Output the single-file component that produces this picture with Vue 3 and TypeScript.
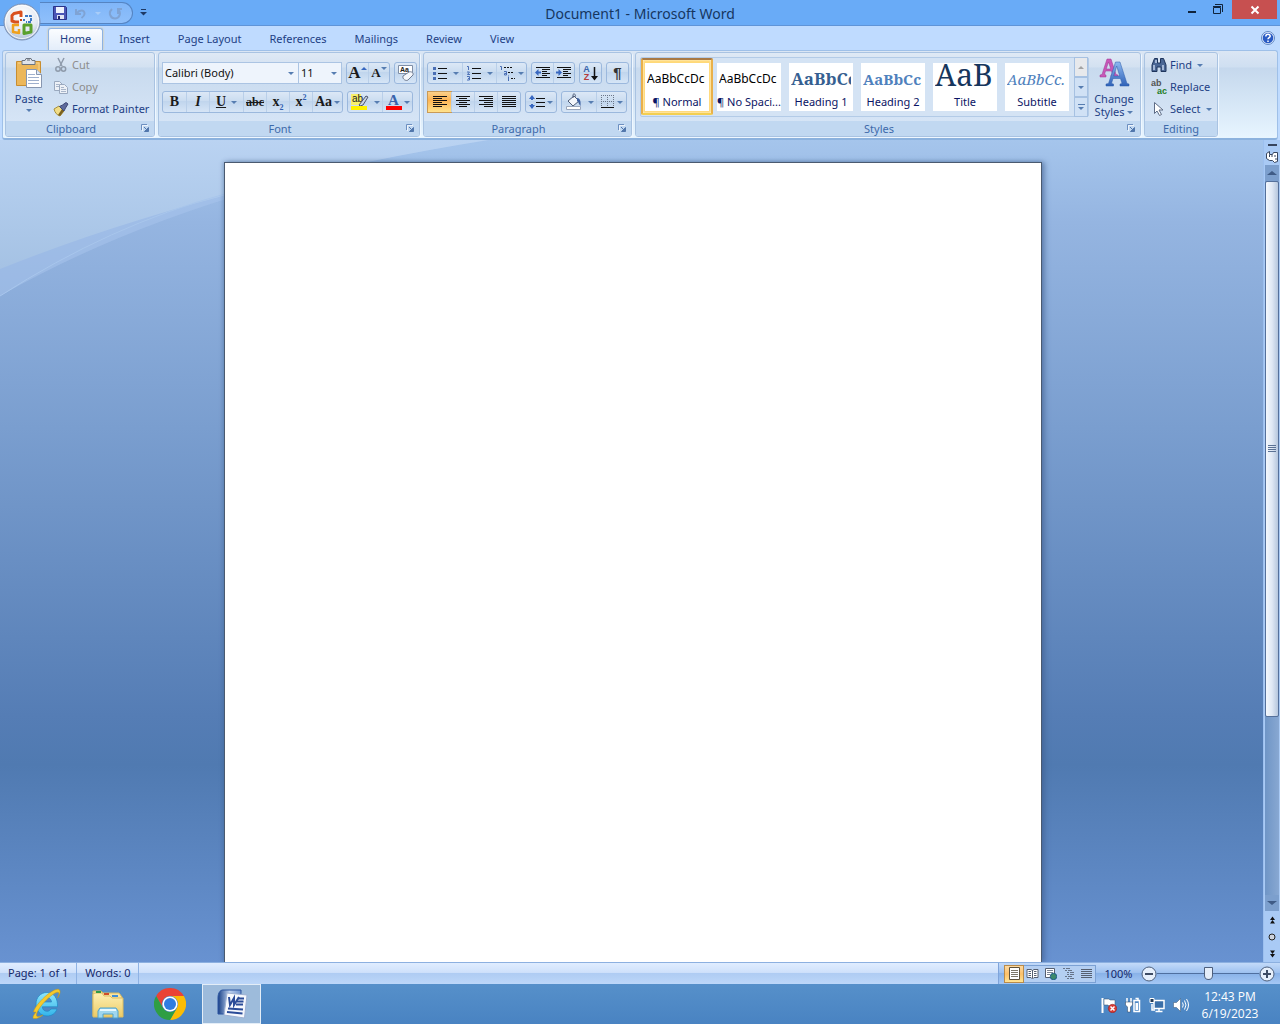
<script setup lang="ts">
import { ref } from 'vue'

interface StyleItem {
  name: string
  sample: string
  kind: string
}

const tabs: string[] = ['Home', 'Insert', 'Page Layout', 'References', 'Mailings', 'Review', 'View']
const activeTab = ref('Home')

const styles: StyleItem[] = [
  { name: '¶ Normal', sample: 'AaBbCcDc', kind: 'normal' },
  { name: '¶ No Spaci...', sample: 'AaBbCcDc', kind: 'normal' },
  { name: 'Heading 1', sample: 'AaBbCc', kind: 'h1' },
  { name: 'Heading 2', sample: 'AaBbCc', kind: 'h2' },
  { name: 'Title', sample: 'AaB', kind: 'title' },
  { name: 'Subtitle', sample: 'AaBbCc.', kind: 'subtitle' },
]
const activeStyle = ref('¶ Normal')

const fontName = ref('Calibri (Body)')
const fontSize = ref('11')
const align = ref('left')
const aligns: string[] = ['left', 'center', 'right', 'justify']
const view = ref('print')
const views: string[] = ['print', 'reading', 'web', 'outline', 'draft']
const zoom = ref(100)
const body = ref('')
</script>

<template>
  <div class="app">
    <svg class="defs" aria-hidden="true">
      <defs>
        <linearGradient id="gBlueA" x1="0" y1="0" x2="0" y2="1">
          <stop offset="0" stop-color="#8db8f0" /><stop offset="1" stop-color="#2f62b8" />
        </linearGradient>
        <linearGradient id="gFolder" x1="0" y1="0" x2="0" y2="1">
          <stop offset="0" stop-color="#fdf0b4" /><stop offset="1" stop-color="#eccb66" />
        </linearGradient>
        <linearGradient id="gIe" x1="0" y1="0" x2="0" y2="1">
          <stop offset="0" stop-color="#8fe6fb" /><stop offset="1" stop-color="#33b4ea" />
        </linearGradient>
        <linearGradient id="gWord" x1="0" y1="0" x2="1" y2="0">
          <stop offset="0" stop-color="#173f87" /><stop offset="0.5" stop-color="#bcd0ee" /><stop offset="1" stop-color="#6f93cf" />
        </linearGradient>
        <radialGradient id="gOrb" cx="0.5" cy="0.3" r="0.75">
          <stop offset="0" stop-color="#ffffff" /><stop offset="0.6" stop-color="#e3e9f2" /><stop offset="1" stop-color="#9fb2cd" />
        </radialGradient>
        <linearGradient id="gSwoosh" x1="0" y1="0" x2="0" y2="1">
          <stop offset="0" stop-color="#bad3f2" /><stop offset="1" stop-color="#a5c2e4" />
        </linearGradient>
      </defs>
      <symbol id="launcher" viewBox="0 0 9 9">
        <path d="M0.5 6V0.5H6" fill="none" stroke="#6c8fc0" />
        <path d="M3 3l3 3" stroke="#5277ac" />
        <path d="M7.5 3.5v4h-4z" fill="#5277ac" stroke="#5277ac" />
        <path d="M1.500 7V1.500H7" fill="none" stroke="#fff" opacity=".7" />
      </symbol>
      <symbol id="lines-left" viewBox="0 0 16 14"><path d="M1 1.500h14M1 3.500h9M1 5.500h14M1 7.500h9M1 9.500h14M1 11.500h9" stroke="#111" /></symbol>
      <symbol id="lines-center" viewBox="0 0 16 14"><path d="M1 1.500h14M4 3.500h8M1 5.500h14M4 7.500h8M1 9.500h14M4 11.500h8" stroke="#111" /></symbol>
      <symbol id="lines-right" viewBox="0 0 16 14"><path d="M1 1.500h14M6 3.500h9M1 5.500h14M6 7.500h9M1 9.500h14M6 11.500h9" stroke="#111" /></symbol>
      <symbol id="lines-justify" viewBox="0 0 16 14"><path d="M1 1.500h14M1 3.500h14M1 5.500h14M1 7.500h14M1 9.500h14M1 11.500h14" stroke="#111" /></symbol>
      <symbol id="view-print" viewBox="0 0 13 13">
        <path d="M1.500.5h10v12h-10z" fill="#fff" stroke="#5d513c" /><path d="M3 3.500h7M3 5.500h7M3 7.500h7M3 9.500h7" stroke="#7c7668" />
      </symbol>
      <symbol id="view-reading" viewBox="0 0 13 13">
        <path d="M1 2.500h4l1.500 1 1.500-1h4v8H8l-1.500 1.500L5 10.500H1z" fill="#fff" stroke="#555f70" /><path d="M6.500 3v8M2.500 4.500H5M2.500 6.500H5M2.500 8.500H5M8 4.500h2.500M8 6.500h2.500M8 8.500h2.500" stroke="#555f70" />
      </symbol>
      <symbol id="view-web" viewBox="0 0 13 13">
        <path d="M1.500 1.500h9v9h-9z" fill="#fff" stroke="#555f70" /><path d="M3 3.500h6M3 5.500h6M3 7.500h3" stroke="#7a8494" /><circle cx="9.500" cy="9.500" r="3.200" fill="#3c8a6b" stroke="#1f5c8b" />
      </symbol>
      <symbol id="view-outline" viewBox="0 0 13 13">
        <path d="M1 1.500h7M3 3.500h7M5 5.500h7M5 7.500h7M3 9.500h7M5 11.500h7" stroke="#667388" stroke-dasharray="2 1 8 0" />
      </symbol>
      <symbol id="view-draft" viewBox="0 0 13 13">
        <path d="M1 2.500h11M1 4.500h11M1 6.500h11M1 8.500h11M1 10.500h11" stroke="#555f70" />
      </symbol>
    </svg>

    <header class="titlebar">
      <button class="orb" aria-label="Office Button">
        <svg viewBox="0 0 38 38" width="38" height="38">
          <circle cx="19" cy="19" r="18" fill="url(#gOrb)" stroke="#7a90b4" />
          <circle cx="19" cy="19" r="16.500" fill="none" stroke="#fff" opacity=".8" />
          <g fill="none" stroke-linejoin="round">
            <path d="M18 14V9l-7 1.500-2 2V18l3 1h4" stroke="#d9501e" stroke-width="3" />
            <path d="M22 13h6v6h-5" stroke="#3c78c4" stroke-width="2" stroke-dasharray="3 1" />
            <path d="M16 22h-6v7l6 1v-4" stroke="#f0a11c" stroke-width="2.500" />
            <path d="M21 22h7v7l-7 1.500z" stroke="#5aa02c" stroke-width="3" />
          </g>
          <path d="M17 16h2v2h-2z" fill="#c0461c" /><path d="M20 16h2v2h-2z" fill="#3c78c4" />
        </svg>
      </button>
      <div class="qat">
        <button class="qbtn" aria-label="Save">
          <svg viewBox="0 0 14 14" width="14" height="14"><path d="M.5.500h12l1 1v12H.5z" fill="#4a55b5" stroke="#2b3388" /><path d="M3 1h8v6H3z" fill="#eef2fc" /><path d="M4 9h7v4H4z" fill="#dfe3f3" /><path d="M5 10h2v3H5z" fill="#20276e" /></svg>
        </button>
        <button class="qbtn" aria-label="Undo" disabled>
          <svg viewBox="0 0 14 14" width="14" height="14"><path d="M2 3v5h5M2.500 7.500C6 3 11 4 10.500 8c-.2 2-1.500 3-3 4" fill="none" stroke="#7fa3d4" stroke-width="2" /></svg>
        </button>
        <i class="arrow pale"></i>
        <button class="qbtn" aria-label="Repeat" disabled>
          <svg viewBox="0 0 14 14" width="14" height="14"><path d="M4 3C-.5 7 3 12.500 7 12.500S14 7 10 3.500M10 8V3h4" fill="none" stroke="#7fa3d4" stroke-width="2" /></svg>
        </button>
      </div>
      <button class="qmore" aria-label="Customize Quick Access Toolbar">
        <svg viewBox="0 0 7 7" width="7" height="7"><path d="M1 .5h5" stroke="#1e3a66" /><path d="M0 3h7L3.500 6.500z" fill="#1e3a66" /></svg>
      </button>
      <h1>Document1 - Microsoft Word</h1>
      <div class="winbtns">
        <button aria-label="Minimize"><svg viewBox="0 0 12 12" width="12" height="12"><path d="M2 9h8" stroke="#10243c" stroke-width="2" /></svg></button>
        <button aria-label="Restore"><svg viewBox="0 0 12 12" width="12" height="12"><path d="M1.500 4.500h7v6h-7zM1 3.500h8M3 1.500h7.500V9" fill="none" stroke="#10243c" /></svg></button>
        <button class="close" aria-label="Close"><svg viewBox="0 0 12 12" width="12" height="12"><path d="M2.500 2.500l7 7M9.500 2.500l-7 7" stroke="#fff" stroke-width="2" /></svg></button>
      </div>
    </header>

    <nav class="tabs" role="tablist">
      <button v-for="t in tabs" :key="t" role="tab" class="tab" :class="{ active: t === activeTab }" :aria-selected="t === activeTab" @click="activeTab = t">{{ t }}</button>
      <button class="help" aria-label="Help">
        <svg viewBox="0 0 14 14" width="14" height="14"><circle cx="7" cy="7" r="6.500" fill="#e8f1fd" stroke="#5f87c4" /><circle cx="7" cy="7" r="5.300" fill="#2a5bc4" /><path d="M4.800 5.500c0-3 4.600-2.800 4.400-.2C9.100 6.600 7 6.600 7 8.300M7 9.500v1.500" fill="none" stroke="#fff" stroke-width="1.500" /></svg>
      </button>
    </nav>

    <section class="ribbon">
      <div class="group clipboard">
        <div class="content">
          <button class="big paste">
            <svg viewBox="0 0 28 32" width="28" height="32">
              <path d="M1.500 4.500h24v24h-24z" fill="#ecb75a" stroke="#c88d30" />
              <path d="M3 6h21v21" fill="none" stroke="#f7d48c" />
              <path d="M7 3.500h3l1-2h5l1 2h3v4H7z" fill="#dfe3ea" stroke="#6c7480" />
              <path d="M12 3h3" stroke="#5e6672" />
              <path d="M11.500 12.500h10l5 5v13h-15z" fill="#fff" stroke="#8796b0" />
              <path d="M21.500 12.500v5h5" fill="#dfe8f5" stroke="#8796b0" />
              <path d="M13 17.500h7M13 20.500h11M13 23.500h11M13 26.500h11" stroke="#9fb0cd" />
            </svg>
            <span>Paste</span>
            <i class="arrow"></i>
          </button>
          <div class="stack">
            <button class="small" disabled>
              <svg viewBox="0 0 16 16" width="16" height="16"><path d="M5 1l4 8M11 1L7 9" stroke="#8f9bab" stroke-width="1.500" /><circle cx="5" cy="12" r="2.200" fill="none" stroke="#8f9bab" stroke-width="1.500" /><circle cx="10.500" cy="12" r="2.200" fill="none" stroke="#8f9bab" stroke-width="1.500" /></svg>
              Cut
            </button>
            <button class="small" disabled>
              <svg viewBox="0 0 16 16" width="16" height="16"><path d="M1.500 2.500h5l3 3v6h-8z" fill="#edf1f7" stroke="#9aa9bf" /><path d="M6.500 5.500h5l3 3v6h-8z" fill="#edf1f7" stroke="#9aa9bf" /><path d="M3 5.500h3M3 7.500h3M8 8.500h3M8 10.500h5M8 12.500h5" stroke="#a9b6ca" /></svg>
              Copy
            </button>
            <button class="small">
              <svg viewBox="0 0 16 16" width="16" height="16"><path d="M1 8l5-3 5 5-4 5c-3-1-5-3-6-7z" fill="#f1dc86" stroke="#a8913b" /><path d="M7 15l4-5-2-2-4 6z" fill="#7b6120" /><path d="M6.500 5.500l3-1.500L13 1.500l2 1.500-2.500 4-1.500 3z" fill="#5d6a9c" stroke="#3e4874" /></svg>
              Format Painter
            </button>
          </div>
        </div>
        <footer><span>Clipboard</span><button aria-label="Clipboard options"><svg width="9" height="9"><use href="#launcher" /></svg></button></footer>
      </div>

      <div class="group font">
        <div class="content rows">
          <div class="row">
            <div class="combos">
              <label class="combo name"><select v-model="fontName" aria-label="Font"><option>Calibri (Body)</option><option>Cambria</option></select><i class="arrow"></i></label>
              <label class="combo size"><select v-model="fontSize" aria-label="Font size"><option>11</option><option>12</option></select><i class="arrow"></i></label>
            </div>
            <div class="bg">
              <button class="b serif grow" aria-label="Grow Font">A<i class="tri up"></i></button>
              <button class="b serif shrink" aria-label="Shrink Font">A<i class="tri"></i></button>
            </div>
            <div class="bg">
              <button class="b" aria-label="Clear Formatting">
                <svg viewBox="0 0 18 18" width="18" height="18"><path d="M1.500 1.500h14v8h-14z" fill="#fff" stroke="#7f8ea6" /><text x="3" y="8" font-size="7" font-weight="700" font-family="Liberation Sans" fill="#222">Aa</text><path d="M6 12l6-4c2-1 5 1 4 3l-5 5c-2 1.500-6-1-5-4z" fill="#f5f7fb" stroke="#6f7b90" /></svg>
              </button>
            </div>
          </div>
          <div class="row">
            <div class="bg">
              <button class="b serif"><b>B</b></button>
              <button class="b serif"><b><em>I</em></b></button>
              <button class="b wide serif"><b class="u">U</b><i class="arrow"></i></button>
              <button class="b serif strike">abc</button>
              <button class="b serif"><b>x<sub>2</sub></b></button>
              <button class="b serif"><b>x<sup>2</sup></b></button>
              <button class="b mid serif case">Aa<i class="arrow"></i></button>
            </div>
            <div class="bg">
              <button class="b wide" aria-label="Text Highlight Color">
                <svg viewBox="0 0 18 18" width="18" height="18"><path d="M0 1h10v11H0z" fill="#f7f06a" /><text x="1" y="9" font-size="10" font-family="Liberation Sans" fill="#222">ab</text><path d="M8 12l7-9 2 1-5 8-3 1z" fill="#c9d3e4" stroke="#4c566c" /><path d="M0 13h16v4H0z" fill="#fff200" /></svg>
                <i class="arrow"></i>
              </button>
              <button class="b mid" aria-label="Font Color">
                <span class="fc">A</span><i class="arrow"></i>
              </button>
            </div>
          </div>
        </div>
        <footer><span>Font</span><button aria-label="Font options"><svg width="9" height="9"><use href="#launcher" /></svg></button></footer>
      </div>

      <div class="group paragraph">
        <div class="content rows">
          <div class="row">
            <div class="bg">
              <button class="b wide" aria-label="Bullets"><svg viewBox="0 0 16 16" width="16" height="16"><path d="M6 3.500h9M6 8.500h9M6 13.500h9" stroke="#111" /><path d="M1 2h3v3H1zM1 7h3v3H1zM1 12h3v3H1z" fill="#4a6fb5" /></svg><i class="arrow"></i></button>
              <button class="b wide" aria-label="Numbering"><svg viewBox="0 0 16 16" width="16" height="16"><path d="M6 3.500h9M6 8.500h9M6 13.500h9" stroke="#111" /><path d="M1 1.500h1.500V5M1 7h2.500L1.500 9.500H4M1 11.500h2.500v3.500H1M2 13.500h1.500" fill="none" stroke="#4a6fb5" /></svg><i class="arrow"></i></button>
              <button class="b mid" aria-label="Multilevel List"><svg viewBox="0 0 17 16" width="17" height="16"><path d="M5 2.500h8M9 7.500h6M12 13.500h4" stroke="#111" stroke-dasharray="2 1" /><path d="M1 1.500h1.500V5M5 6.500h2.500V10H5.500V8.500h2M9.500 10.500v1M9.500 12v4" fill="none" stroke="#4a6fb5" /></svg><i class="arrow"></i></button>
            </div>
            <div class="bg">
              <button class="b" aria-label="Decrease Indent"><svg viewBox="0 0 16 14" width="16" height="14"><path d="M1 1.500h14M7 3.500h8M7 5.500h5M7 7.500h8M7 9.500h5M1 11.500h14" stroke="#111" /><path d="M0 6.500L3.500 3v7z" fill="#3767c0" /><path d="M3 6.500h3" stroke="#3767c0" stroke-width="2" /></svg></button>
              <button class="b" aria-label="Increase Indent"><svg viewBox="0 0 16 14" width="16" height="14"><path d="M1 1.500h14M7 3.500h8M7 5.500h5M7 7.500h8M7 9.500h5M1 11.500h14" stroke="#111" /><path d="M6 6.500L2.500 3v7z" fill="#3767c0" /><path d="M0 6.500h3" stroke="#3767c0" stroke-width="2" /></svg></button>
            </div>
            <div class="bg">
              <button class="b sort" aria-label="Sort"><span><span>A</span><span class="z">Z</span></span><svg viewBox="0 0 7 15" width="7" height="15"><path d="M3.500 1v12" stroke="#111" stroke-width="1.500" /><path d="M0 10h7l-3.500 4.500z" fill="#111" /></svg></button>
            </div>
            <div class="bg"><button class="b pil">¶</button></div>
          </div>
          <div class="row">
            <div class="bg">
              <button v-for="a in aligns" :key="a" class="b al" :class="{ on: align === a }" :aria-label="'Align ' + a" @click="align = a"><svg width="16" height="14"><use :href="'#lines-' + a" /></svg></button>
            </div>
            <div class="bg">
              <button class="b mid" aria-label="Line Spacing"><svg viewBox="0 0 16 16" width="16" height="16"><path d="M7 4.500h9M7 8.500h9M7 12.500h9" stroke="#111" /><path d="M0 5l3-4 3 4zM0 11l3 4 3-4z" fill="#3767c0" /><path d="M3 4v2M3 10v2" stroke="#3767c0" stroke-width="2" /></svg><i class="arrow"></i></button>
            </div>
            <div class="bg">
              <button class="b wide" aria-label="Shading"><svg viewBox="0 0 18 18" width="18" height="18"><path d="M3 8l6-5 5 5-6 5z" fill="#f3f6fb" stroke="#4d5b76" /><path d="M8 5V1.500c1.500-1.500 2.500 0 2.500 2" fill="none" stroke="#4d5b76" /><path d="M12 5c3 0 4 3 3.500 8-2-2-1.500-4-3.500-5z" fill="#3c5f9f" /><path d="M1.500 13.500h14v3h-14z" fill="#fff" stroke="#9aa7bd" /></svg><i class="arrow"></i></button>
              <button class="b mid" aria-label="Borders"><svg viewBox="0 0 14 14" width="14" height="14"><path d="M.5 0v13M6.500 0v13M12.500 0v13M0 .5h13M0 6.500h13" fill="none" stroke="#6b7688" stroke-dasharray="1 1" /><path d="M0 12.500h13" stroke="#111" /></svg><i class="arrow"></i></button>
            </div>
          </div>
        </div>
        <footer><span>Paragraph</span><button aria-label="Paragraph options"><svg width="9" height="9"><use href="#launcher" /></svg></button></footer>
      </div>

      <div class="group styles">
        <div class="content">
          <div class="gallery">
            <button v-for="s in styles" :key="s.name" class="card" :class="{ sel: activeStyle === s.name }" @click="activeStyle = s.name">
              <span class="sheet"><span class="sample" :class="s.kind">{{ s.sample }}</span><span class="nm">{{ s.name }}</span></span>
            </button>
            <div class="spin">
              <button disabled aria-label="Scroll up"><i class="tri up"></i></button>
              <button aria-label="Scroll down"><i class="arrow"></i></button>
              <button aria-label="More styles"><i class="bar"></i><i class="arrow"></i></button>
            </div>
          </div>
          <button class="big change">
            <svg viewBox="0 0 32 32" width="32" height="32">
              <path fill-rule="evenodd" d="M2 20v-2l2-.5L9 2h4l5 15.500 2 .5v2h-7v-2l1.500-.5-1-3.500h-6L6.500 17.500 8 18v2zM8.200 12h4.600L10.500 5z" fill="#c858b8" stroke="#9c3592" stroke-width=".5" />
              <path fill-rule="evenodd" d="M8 29v-2l2.500-.5L17.500 5H22l7 21.500 2 .5v2h-9v-2l2-.5-1.500-5H15l-1.500 5 2 .5v2zM15.700 19h6L18.700 9z" fill="url(#gBlueA)" stroke="#2b5aa8" stroke-width=".5" />
            </svg>
            <span>Change<br />Styles <i class="arrow"></i></span>
          </button>
        </div>
        <footer><span>Styles</span><button aria-label="Styles options"><svg width="9" height="9"><use href="#launcher" /></svg></button></footer>
      </div>

      <div class="group editing">
        <div class="content">
          <div class="stack">
            <button class="small">
              <svg viewBox="0 0 16 16" width="16" height="16"><path d="M3.500 1.500h3V6h3V1.500h3L15 8v6.500h-5V10H6v4.500H1V8z" fill="#4a6694" stroke="#1f355c" /><path d="M3 8v5M12 8v5M5 3v3" stroke="#c4d4ee" stroke-width="1.500" /></svg>
              Find <i class="arrow"></i>
            </button>
            <button class="small">
              <span class="rep"><span>ab</span><b>ac</b></span>
              Replace
            </button>
            <button class="small">
              <svg viewBox="0 0 16 16" width="16" height="16"><path d="M3.500 1.500v11l2.500-2.500 2.500 4.500 2-1-2.500-4.500h4z" fill="#fff" stroke="#5e6c86" /></svg>
              Select <i class="arrow"></i>
            </button>
          </div>
        </div>
        <footer><span>Editing</span></footer>
      </div>
    </section>

    <main class="work">
      <div class="canvas">
        <svg class="swoosh" viewBox="0 0 520 160" width="520" height="160" aria-hidden="true">
          <path d="M0 0H492Q200 42 0 156z" fill="#a9c6ee" opacity=".5" />
          <path d="M0 0H488Q210 45 0 129z" fill="url(#gSwoosh)" />
          <path d="M0 156Q110 85 225 54" fill="none" stroke="#a8c6ec" />
        </svg>
        <textarea v-model="body" class="page" aria-label="Document text"></textarea>
      </div>
      <aside class="scroll">
        <button class="split" aria-label="Split window"></button>
        <button class="ruler" aria-label="View Ruler"><svg viewBox="0 0 12 12" width="12" height="12"><path d="M.5 2.500L3.500.5v3h3l1-2h4v9l-3 1-2-2h-3l-3-2z" fill="#fff" stroke="#37455e" /><path d="M3.500 4v2M6 4v2M9 4v2M9 8h2" stroke="#37455e" /></svg></button>
        <button class="sb" aria-label="Scroll up"><i class="tri up"></i></button>
        <div class="track"><div class="thumb"><i></i><i></i><i></i><i></i></div></div>
        <button class="sb" aria-label="Scroll down"><i class="tri"></i></button>
        <button class="nav" aria-label="Previous page"><svg viewBox="0 0 7 8" width="7" height="8"><path d="M1 4l2.500-3.500L6 4zM1 7.500L3.500 4 6 7.500z" fill="#111" /></svg></button>
        <button class="nav" aria-label="Select browse object"><svg viewBox="0 0 8 8" width="8" height="8"><circle cx="4" cy="4" r="3" fill="#cdd3dd" stroke="#222" /></svg></button>
        <button class="nav" aria-label="Next page"><svg viewBox="0 0 7 8" width="7" height="8"><path d="M1 .5L3.500 4 6 .5zM1 4l2.500 3.500L6 4z" fill="#111" /></svg></button>
      </aside>
    </main>

    <div class="status">
      <button class="st">Page: 1 of 1</button>
      <button class="st">Words: 0</button>
      <div class="right">
        <div class="views">
          <button v-for="v in views" :key="v" :class="{ on: view === v }" :aria-label="v + ' view'" @click="view = v"><svg width="13" height="13"><use :href="'#view-' + v" /></svg></button>
        </div>
        <button class="pct">{{ zoom }}%</button>
        <div class="zoom">
          <button aria-label="Zoom out"><svg viewBox="0 0 16 16" width="16" height="16"><circle cx="8" cy="8" r="7" fill="#e6effb" stroke="#4d5f7c" /><path d="M4 8h8" stroke="#3e4c64" stroke-width="2" /></svg></button>
          <input v-model="zoom" type="range" min="0" max="200" aria-label="Zoom" />
          <button aria-label="Zoom in"><svg viewBox="0 0 16 16" width="16" height="16"><circle cx="8" cy="8" r="7" fill="#e6effb" stroke="#4d5f7c" /><path d="M4 8h8M8 4v8" stroke="#3e4c64" stroke-width="2" /></svg></button>
        </div>
      </div>
    </div>

    <footer class="taskbar">
      <div class="apps">
        <button aria-label="Internet Explorer">
          <svg viewBox="0 0 32 32" width="32" height="32">
            <path fill-rule="evenodd" d="M17 4.500c-6.500 0-11 5-11 11.500s4.500 12 11 12c4.700 0 8.500-2.500 10-7h-6c-1 1.500-2.300 2.300-4 2.300-2.700 0-4.500-1.700-4.700-4.500h15.200C28 10.500 24 4.500 17 4.500zM12.300 14c.5-2.700 2.200-4.300 4.700-4.300s4.300 1.600 4.500 4.300z" fill="url(#gIe)" stroke="#1f86c4" stroke-width=".7" />
            <path d="M6 24c-3 4-4 6-2 6.500 2.500.6 6-1.200 9-3.500-2 .9-5 2.200-6.200 1.200C5.500 26.800 8 21 14 14.500S26.500 3 28.500 4.500c1 .9.3 3-1 5.500 2.500-4 3.500-7.200 1.500-8.500C26 0 18.500 5 12.500 11 8 15.500 4 21 3.500 24z" fill="#f6c92c" stroke="#c79612" stroke-width=".5" />
          </svg>
        </button>
        <button aria-label="File Explorer">
          <svg viewBox="0 0 32 32" width="32" height="32">
            <path d="M1 5V3h8l2 2h8V5h8l3 4v19H1z" fill="#f7e3a0" stroke="#d8b85c" />
            <path d="M3 5h7l2 3h6l2 2h11v19H1V6z" fill="url(#gFolder)" stroke="#dcbc62" />
            <path d="M4 3h5v2H4z" fill="#2e9a48" /><path d="M12 5h5v2h-5z" fill="#d04c2a" /><path d="M20 7h6v2h-6z" fill="#3f8fd8" />
            <path d="M6 30v-7l2-3h16l2 3v7h-5v-4H11v4z" fill="#9fd6ee" stroke="#4fa2cc" /><path d="M8 22h16" stroke="#e6f8ff" stroke-width="2" />
          </svg>
        </button>
        <button aria-label="Google Chrome">
          <svg viewBox="0 0 32 32" width="32" height="32">
            <path d="M2.140 8A16 16 0 0 1 29.860 8H16a8 8 0 0 0-6.930 12z" fill="#ea4335" />
            <path d="M29.860 8A16 16 0 0 1 16 32l6.930-12A8 8 0 0 0 16 8z" fill="#fbbc05" />
            <path d="M16 32A16 16 0 0 1 2.140 8l6.930 12a8 8 0 0 0 13.860 0z" fill="#2f9e44" />
            <circle cx="16" cy="16" r="7.600" fill="#fff" /><circle cx="16" cy="16" r="6" fill="#2f7de1" />
          </svg>
        </button>
        <button class="run" aria-label="Microsoft Word">
          <svg viewBox="0 0 32 32" width="32" height="32">
            <path d="M7 2h18v3l-3 21H2V10c0-5 2-8 5-8z" fill="url(#gWord)" stroke="#2c55a0" />
            <path d="M11 5l20 2-2.500 23L8 27z" fill="#f6f8fd" stroke="#9db0d2" />
            <path d="M13 9l1 8 4-7v7l5-8" fill="none" stroke="#2a4b98" stroke-width="2" />
            <path d="M22 10.500h6M21 13.500h6.500M20 16.500h7M12 20.500l15 1M11 24l15.500 1.500" stroke="#2a4b98" stroke-width="2" />
          </svg>
        </button>
      </div>
      <div class="tray">
        <button aria-label="Action Center"><svg viewBox="0 0 16 16" width="16" height="16"><path d="M1.500 1v15" stroke="#fff" stroke-width="2" /><path d="M3 2h5l1 1h5v6H8L7 8H3z" fill="#fff" stroke="#35516f" stroke-width=".5" /><circle cx="11.500" cy="11.500" r="4.200" fill="#d93a34" stroke="#8e1c1c" stroke-width=".5" /><path d="M9.500 9.500l4 4M13.500 9.500l-4 4" stroke="#fff" stroke-width="1.500" /></svg></button>
        <button aria-label="Power"><svg viewBox="0 0 16 16" width="16" height="16"><path d="M2 1v4M6 1v4" stroke="#fff" stroke-width="1.500" /><path d="M.5 5h7v3L5.500 10v5h-3v-5l-2-2z" fill="#fff" stroke="#243b56" stroke-width=".5" /><path d="M9 3.500h5.500v11H9zM10.500 1.500h2.500v2" fill="none" stroke="#fff" stroke-width="1.500" /><path d="M10.500 6h2.500v7h-2.500z" fill="#fff" /></svg></button>
        <button aria-label="Network"><svg viewBox="0 0 16 16" width="16" height="16"><path d="M5 3.500h10v8H5z" fill="#3a6fa8" stroke="#fff" stroke-width="1.500" /><path d="M10 12v2M6.500 14.500h7M3 7v6h3" fill="none" stroke="#fff" stroke-width="1.500" /><path d="M1 1.500h4v4H1z" fill="#243b56" stroke="#fff" /></svg></button>
        <button aria-label="Volume"><svg viewBox="0 0 16 16" width="16" height="16"><path d="M.5 5.500h3l4-4v13l-4-4h-3z" fill="#fff" stroke="#35516f" stroke-width=".5" /><path d="M9.500 5.500q1.500 2.500 0 5M11.500 3.500q3 4.500 0 9M13.500 2q4 6 0 12" fill="none" stroke="#fff" /></svg></button>
        <time class="clock"><span>12:43 PM</span><span>6/19/2023</span></time>
      </div>
    </footer>
  </div>
</template>

<style>
body { margin: 0; }
</style>

<style scoped>
.app {
  display: flex; flex-direction: column; height: 100vh; overflow: hidden;
  font: 11px/14px "Noto Sans", "Open Sans", sans-serif; color: #1e3f85; background: #bfdbff;
}
.app *, .app *::before, .app *::after { box-sizing: border-box; }
.defs { position: absolute; width: 0; height: 0; }
button { font: inherit; color: inherit; background: none; border: 0; padding: 0; margin: 0; }
svg { display: block; flex: none; }
.arrow, .tri { display: inline-block; flex: none; width: 0; height: 0; border: 3px solid transparent; border-top-color: #567db1; border-bottom-width: 0; }
.tri.up { border-top-width: 0; border-bottom: 3px solid #3767c0; }
.arrow.pale { border-top-color: #a9cdf8; }

.titlebar { display: flex; align-items: flex-start; height: 26px; flex: none; background: #69abf7; border-bottom: 1px solid #5f94d8; position: relative; }
.orb { position: absolute; left: 3px; top: 3px; z-index: 2; border-radius: 50%; }
.qat { display: flex; align-items: center; gap: 7px; margin-left: 40px; padding: 0 10px 0 13px; width: 93px; height: 22px; margin-top: 2px; border: 1px solid #5584c2; border-left: 0; border-radius: 0 11px 11px 0; background: linear-gradient(#80b6f8, #8fc0fb); }
.qmore { margin: 9px 0 0 7px; }
h1 { position: absolute; left: 0; right: 0; top: 4px; margin: 0; text-align: center; font: 14px/20px "Noto Sans", sans-serif; color: #16365f; pointer-events: none; }
.winbtns { display: flex; margin-left: auto; padding-right: 3px; }
.winbtns button { width: 26px; height: 18px; display: flex; align-items: center; justify-content: center; }
.winbtns .close { width: 45px; height: 19px; margin-left: 1px; background: #c75050; }

.tabs { display: flex; align-items: flex-end; gap: 4px; height: 24px; flex: none; padding: 0 5px 0 48px; background: #bfdbff; }
.tab { height: 22px; padding: 0 11px 2px; border: 1px solid transparent; border-bottom: 0; }
.tab.active { background: linear-gradient(#fbfdff, #e3edfa); border-color: #8db2e3; border-radius: 3px 3px 0 0; box-shadow: 0 0 2px #f3c65d; }
.help { margin-left: auto; align-self: center; }

.ribbon { display: flex; gap: 3px; flex: none; height: 90px; margin: 0 2px; padding: 1px 2px; border: 1px solid #9fc0e8; border-bottom: 2px solid #8cb2de; border-radius: 3px; background: linear-gradient(#dbe6f4 0, #cfdff1 16px, #c5d8ed 17px, #e7f5ff 100%); }
.group { display: flex; flex-direction: column; flex: none; height: 85px; border: 1px solid #a9c3e2; border-radius: 3px; box-shadow: 1px 1px 0 #eff7ff; background: linear-gradient(#dfe9f5 0, #d3e1f1 14px, #c8daee 15px, #d9e7f8 100%); overflow: hidden; }
.content { flex: 1; display: flex; }
.group > footer { display: flex; align-items: center; justify-content: center; height: 15px; background: #c1d8f1; color: #3e6aaa; position: relative; }
.group > footer button { position: absolute; right: 4px; top: 3px; }
.clipboard { width: 150px; }
.font { width: 262px; }
.paragraph { width: 209px; }
.styles { width: 506px; }
.editing { width: 74px; }
.clipboard > footer, .font > footer, .paragraph > footer, .styles > footer { padding-right: 18px; }
.big { display: flex; flex-direction: column; align-items: center; }
.paste { width: 46px; padding-top: 4px; }
.paste span { margin: 3px 0; }
.stack { display: flex; flex-direction: column; padding-top: 1px; }
.small { display: flex; align-items: center; gap: 3px; height: 22px; white-space: nowrap; }
.small:disabled { color: #8d8d8d; }
.small .arrow { margin-left: 2px; }
.clipboard .small { padding-left: 1px; }

.rows { flex-direction: column; gap: 7px; padding: 9px 3px 0; }
.row { display: flex; gap: 4px; height: 22px; }
.bg, .combos { display: flex; border: 1px solid #9bb8dd; border-radius: 3px; background: linear-gradient(#dce8f6, #cadcf0 45%, #c0d5ed 46%, #d6e5f6); }
.b { display: flex; align-items: center; justify-content: center; gap: 2px; width: 21px; color: #1b1b1b; position: relative; }
.b + .b { border-left: 1px solid #b9cfe9; }
.b.al, .font .row + .row .b { width: 23px; }
.b.wide, .font .row + .row .b.wide { width: 34px; gap: 4px; }
.b.mid, .font .row + .row .b.mid { width: 30px; gap: 1px; }
.b .arrow { margin-left: 1px; }
.b.on { background: linear-gradient(#fbd08a, #fdb454 40%, #ffe28c); box-shadow: 0 0 0 1px #c99a57; }
.serif { font: 700 14px/18px "Liberation Serif", serif; }
.serif sub, .serif sup { font-size: 8px; line-height: 0; color: #315fb0; }
.u { text-decoration: underline; }
.strike { font: 700 12px/14px "Liberation Serif", serif; text-decoration: line-through; }
.grow { font-size: 17px; gap: 0; }
.shrink { font-size: 13px; gap: 0; }
.grow .tri, .shrink .tri { align-self: flex-start; margin: 4px 0 0; }
.fc { width: 16px; height: 16px; font: 700 15px/12px "Liberation Serif", serif; color: #3963ab; border-bottom: 4px solid #f00; text-align: center; }
.sort { gap: 1px; }
.sort > span { display: flex; flex-direction: column; font: 700 9px/8px "Liberation Sans", sans-serif; color: #3963ab; }
.sort .z { color: #b53b3b; }
.pil { font: 700 15px/18px "Liberation Sans", sans-serif; color: #333; }
.combos { background: #eef4fc; border-color: #abc4e3; border-radius: 0; }
.combo { display: flex; align-items: center; position: relative; }
.combo + .combo { border-left: 1px solid #abc4e3; }
.combo select { appearance: none; width: 100%; height: 20px; border: 0; padding: 0 2px; background: none; font: inherit; color: #111; outline: 0; }
.combo .arrow { position: absolute; right: 4px; top: 9px; pointer-events: none; }
.combo.name { width: 135px; }
.combo.size { width: 43px; }

.gallery { display: flex; margin: 4px 0 0 4px; height: 60px; border: 1px solid #b3cbe7; background: #d4e3f4; border-radius: 2px; }
.card { width: 72px; height: 57px; padding: 2px; border: 2px solid transparent; border-radius: 2px; }
.card.sel { border-color: #a97a45 #e9b04a #f3cf52; background: #ffd978; box-shadow: inset 0 0 2px #fff; }
.sheet { display: flex; flex-direction: column; align-items: center; width: 64px; height: 48px; background: #fff; overflow: hidden; color: #0a1464; }
.sample { width: 60px; height: 32px; flex: none; overflow: hidden; white-space: nowrap; text-align: left; font: 12px/32px "Noto Sans", sans-serif; color: #000; }
.sample.h1 { font: 700 17px/32px "Noto Serif", "DejaVu Serif Condensed", "DejaVu Serif", serif; color: #365f91; }
.sample.h2 { font: 700 15px/32px "Noto Serif", "DejaVu Serif Condensed", "DejaVu Serif", serif; color: #4f81bd; }
.sample.title { font: 30px/24px "Noto Serif", "DejaVu Serif Condensed", "DejaVu Serif", serif; color: #17365d; }
.sample.subtitle { font: italic 15px/32px "Noto Serif", "DejaVu Serif Condensed", "DejaVu Serif", serif; color: #4f81bd; }
.nm { white-space: nowrap; }
.spin { display: flex; flex-direction: column; width: 14px; margin: -1px 0 -1px 1px; }
.spin button { flex: 1; display: flex; flex-direction: column; align-items: center; justify-content: center; gap: 2px; border: 1px solid #a6c1e2; background: #d0e1f5; }
.spin button:disabled { background: #e7e9ec; }
.spin button:disabled .tri { border-bottom-color: #a3a3a3; }
.bar { width: 7px; height: 1px; background: #567db1; }
.change { width: 50px; padding-top: 4px; }
.change span { line-height: 13px; margin-top: 3px; }
.change .arrow { margin-bottom: 2px; }
.editing .small { padding-left: 6px; }
.rep { width: 16px; height: 16px; font: 700 9px/8px "Liberation Sans", sans-serif; color: #555; display: flex; flex-direction: column; text-align: left; }
.rep b { color: #1f7d26; text-align: right; }

.work { flex: 1; min-height: 0; display: flex; background: linear-gradient(#a5c5ec 0, #95b5e1 10%, #7a9ecf 35%, #557db5 70%, #507ab1 76%, #6892d1 100%); }
.canvas { flex: 1; display: flex; justify-content: center; padding: 22px 0 0 2px; position: relative; overflow: hidden; }
.swoosh { position: absolute; left: 0; top: 0; }
.page { position: relative; width: 100%; max-width: 818px; background: #fff; border: 1px solid #4a5a70; border-bottom: 0; padding: 96px; resize: none; outline: 0; box-shadow: 3px 0 5px #3d5c8a88, -1px 0 4px #3d5c8a66; font: 15px/20px "Open Sans", sans-serif; }
.scroll { width: 17px; display: flex; flex-direction: column; align-items: center; background: #a9caf5; border-left: 1px solid #9dc0ef; }
.split { width: 9px; height: 2px; margin: 4px 0 3px; background: #37455e; }
.ruler { height: 16px; display: flex; align-items: center; }
.sb { width: 14px; height: 16px; display: flex; align-items: center; justify-content: center; background: #7c9fcd; }
.sb .tri { border-width: 4px 5px 0; border-top-color: #3f5b86; }
.sb .tri.up { border-width: 0 5px 4px; border-bottom-color: #3f5b86; }
.track { flex: 1; width: 14px; background: linear-gradient(90deg, #6f95c6, #88a8d2); }
.thumb { height: 75%; border: 1px solid #54709b; border-radius: 2px; background: linear-gradient(90deg, #f4f8fd, #dfe8f4 50%, #b5c6dd); display: flex; flex-direction: column; gap: 1px; align-items: center; justify-content: center; }
.thumb i { width: 8px; height: 1px; background: #5a7194; }
.nav { height: 17px; display: flex; align-items: center; }

.status { height: 22px; flex: none; display: flex; align-items: center; border-top: 1px solid #8cb0e0; background: linear-gradient(#e0edff 0, #cfe1fb 45%, #afccf3 50%, #bdd7f9 100%); color: #15296b; }
.st { height: 21px; padding: 0 8px 2px; border-right: 1px solid #8eb2e4; }
.right { margin-left: auto; height: 21px; display: flex; align-items: center; padding: 0 5px; border-left: 1px solid #7fa4da; background: linear-gradient(#c3daf9, #9fc2f0 45%, #89b2e8 50%, #a5c8f5); }
.views { display: flex; height: 18px; border: 1px solid #7ba1d4; background: #b4cff2; }
.views button { width: 18px; display: flex; align-items: center; justify-content: center; }
.views button.on { background: linear-gradient(#fdd9a0, #fcc069 50%, #ffe493); box-shadow: 0 0 0 1px #b98b4a; }
.pct { width: 45px; }
.zoom { display: flex; align-items: center; }
.zoom input { appearance: none; width: 102px; height: 16px; margin: 0; background: linear-gradient(#4f6f9f, #4f6f9f) center / 100% 1px no-repeat; }
.zoom input::-webkit-slider-thumb { appearance: none; width: 9px; height: 13px; border: 1px solid #4d5f7c; border-radius: 1px 1px 5px 5px; background: #e4edf9; }

.taskbar { height: 40px; flex: none; display: flex; justify-content: space-between; background: linear-gradient(#5690ca, #4983c2); }
.apps { display: flex; gap: 2px; padding-left: 16px; }
.apps button { width: 60px; height: 40px; display: flex; align-items: center; justify-content: center; }
.apps .run { width: 59px; border: 1px solid #e3edf7; background: #9dbbdb; }
.tray { display: flex; align-items: center; gap: 8px; padding: 2px 18px 0 0; }
.clock { display: flex; flex-direction: column; align-items: center; margin-left: 1px; width: 64px; font: 12px/17px "Open Sans", sans-serif; color: #fff; }
</style>
